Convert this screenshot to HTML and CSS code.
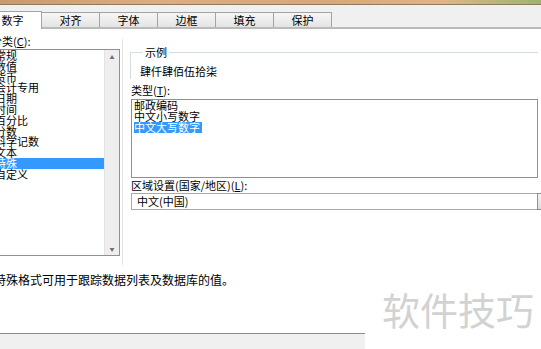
FILE: index.html
```html
<!DOCTYPE html>
<html lang="zh-CN">
<head>
    <meta charset="UTF-8">
    <title>设置单元格格式</title>
    <link rel="stylesheet" href="styles.css">
</head>
<body>
    <div class="window">
        <div class="topbar"></div>

        <div class="tabs">
            <div class="tab active">数字</div>
            <div class="tab">对齐</div>
            <div class="tab">字体</div>
            <div class="tab">边框</div>
            <div class="tab">填充</div>
            <div class="tab">保护</div>
        </div>

        <div class="content">
            <div class="left">
                <div class="label">分类(<u>C</u>):</div>
                <div class="listbox category">
                    <ul class="items">
                        <li>常规</li>
                        <li>数值</li>
                        <li>货币</li>
                        <li>会计专用</li>
                        <li>日期</li>
                        <li>时间</li>
                        <li>百分比</li>
                        <li>分数</li>
                        <li>科学记数</li>
                        <li>文本</li>
                        <li class="selected">特殊</li>
                        <li>自定义</li>
                    </ul>
                    <div class="scrollbar">
                        <span class="arrow">&#9650;</span>
                        <span class="arrow">&#9660;</span>
                    </div>
                </div>
            </div>

            <div class="divider"></div>

            <div class="right">
                <fieldset class="sample">
                    <legend>示例</legend>
                    <div class="sample-text">肆仟肆佰伍拾柒</div>
                </fieldset>

                <div class="label">类型(<u>T</u>):</div>
                <div class="listbox types">
                    <ul class="items">
                        <li>邮政编码</li>
                        <li>中文小写数字</li>
                        <li><span class="selected">中文大写数字</span></li>
                    </ul>
                </div>

                <div class="label locale">区域设置(国家/地区)(<u>L</u>):</div>
                <div class="combo">
                    <div class="combo-field">中文(中国)</div>
                    <div class="combo-button"></div>
                </div>
            </div>
        </div>

        <p class="desc">特殊格式可用于跟踪数据列表及数据库的值。</p>

        <div class="footer"></div>

        <div class="watermark">软件技巧</div>
    </div>
</body>
</html>
```

FILE: styles.css
```css
body {
    margin: 0;
    font-family: "Noto Sans CJK SC", "Noto Sans", sans-serif;
    font-size: 11px;
    color: #000;
    background: #fff;
}
.window {
    position: relative;
    width: 541px;
    height: 349px;
    overflow: hidden;
    display: flex;
    flex-direction: column;
    background: #fff;
}
.topbar {
    height: 4px;
    flex: none;
    background: linear-gradient(90deg, #c99a6a 0%, #dcae7e 30%, #d6a878 60%, #e0b486 82%, #b6b77a 92%, #9fb46a 100%);
    border-bottom: 1px solid #8a7a66;
}
.tabs {
    flex: none;
    height: 22px;
    display: flex;
    align-items: flex-end;
    background: #f0f0f0;
    border-bottom: 2px solid #bababa;
    margin-left: -17px;
}
.tab {
    width: 57px;
    height: 14px;
    line-height: 14px;
    text-align: center;
    border: 1px solid #a3a3a3;
    border-bottom: none;
    border-left: none;
    background: linear-gradient(#f6f6f6, #e4e4e4);
}
.tab.active {
    width: 57px;
    height: 17px;
    line-height: 17px;
    margin-bottom: -2px;
    background: #fff;
    border-left: 1px solid #a3a3a3;
}
.content {
    flex: none;
    display: flex;
}
.label {
    line-height: 12px;
    white-space: nowrap;
}
.left {
    width: 130px;
    margin-left: -10px;
    flex: none;
}
.left .label {
    margin-top: 6px;
    margin-left: 1px;
}
.listbox {
    border: 1px solid #8c9098;
    display: flex;
    background: #fff;
}
.items {
    list-style: none;
    margin: 0;
    padding: 0;
    flex: 1;
}
.items li {
    line-height: 10.8px;
    height: 10.8px;
    padding-left: 4px;
    white-space: nowrap;
}
.category {
    margin-top: 2px;
    height: 205px;
}
.category .items li.selected {
    background: #3399ff;
    color: #fff;
}
.scrollbar {
    width: 14px;
    flex: none;
    background: #eeeeee;
    border-left: 1px solid #e2e2e2;
    display: flex;
    flex-direction: column;
    justify-content: space-between;
    align-items: center;
    padding: 4px 0 3px;
}
.arrow {
    font-size: 5px;
    line-height: 6px;
    color: #6f6f6f;
}
.divider {
    width: 1px;
    margin: 10px 0 0 2px;
    height: 226px;
    background: #e2e2e2;
    flex: none;
}
.right {
    margin-left: 8px;
    width: 407px;
    flex: none;
}
.sample {
    margin: 17px 0 0 -1px;
    padding: 7px 0 0 9px;
    border: 1px solid #d2dce2;
    border-right: none;
    border-bottom: none;
    height: 25px;
}
.sample legend {
    padding: 0 2px;
    margin-left: 3px;
    line-height: 12px;
}
.sample-text {
    line-height: 12px;
}
.right .label {
    margin-top: 5px;
}
.right .label.locale {
    margin-top: 1px;
}
.types {
    margin-top: 3px;
    height: 77px;
}
.types .items li {
    height: 11px;
    line-height: 11px;
    padding-left: 2px;
}
.types .selected {
    background: #3399ff;
    color: #fff;
    display: inline-block;
    padding-right: 2px;
}
.right .label + .combo {
    margin-top: 2px;
}
.combo {
    display: flex;
    height: 17px;
}
.combo-field {
    width: 400px;
    flex: none;
    border: 1px solid #a7aab0;
    border-right: none;
    line-height: 15px;
    padding-left: 5px;
}
.combo-button {
    width: 16px;
    flex: none;
    border: 1px solid #8c8f96;
    background: linear-gradient(#f4f4f4, #dcdcdc);
}
.desc {
    margin: 8px 0 0 -6px;
    font-size: 12px;
    line-height: 14px;
    white-space: nowrap;
}
.footer {
    margin-top: auto;
    width: 365px;
    height: 15px;
    border-top: 1px solid #8d8d8d;
    background: #f0f0f0;
    flex: none;
}
.watermark {
    position: absolute;
    left: 366px;
    top: 282px;
    width: 175px;
    height: 67px;
    padding: 8px 0 0 16px;
    box-sizing: border-box;
    background: #fff;
    font-size: 38px;
    line-height: 37px;
    color: #d2d2d2;
    white-space: nowrap;
}
```
